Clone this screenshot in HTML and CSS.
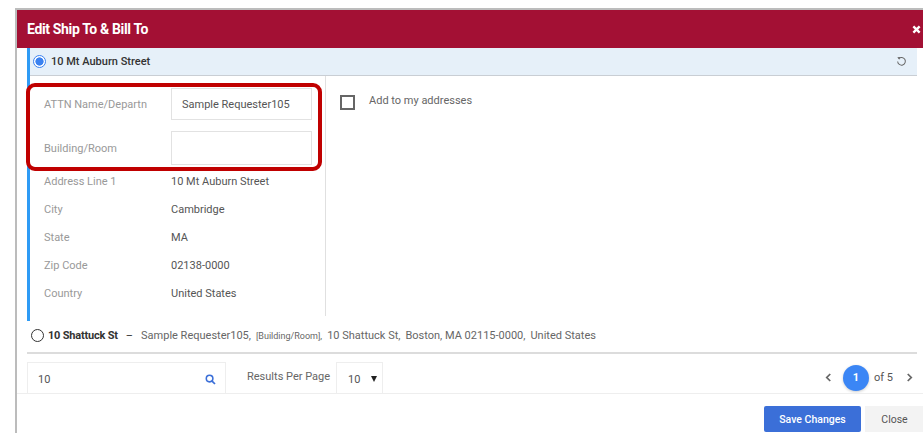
FILE: index.html
```html
<!DOCTYPE html>
<html lang="en">
<head>
<meta charset="utf-8">
<title>Edit Ship To &amp; Bill To</title>
<link rel="stylesheet" href="styles.css">
</head>
<body>
<div class="modal">
  <header class="modal-head">
    <h1>Edit Ship To &amp; Bill To</h1>
    <svg class="close-x" viewBox="0 0 10 10" width="9" height="9"><path d="M1.5 1.5l7 7M8.5 1.5l-7 7" stroke="#fff" stroke-width="2.6" fill="none"/></svg>
  </header>
  <div class="modal-body">
    <section class="address selected">
      <div class="address-title">
        <span class="radio on"></span>
        <span class="name">10 Mt Auburn Street</span>
        <svg class="reset" viewBox="0 0 12 12" width="11" height="11"><path d="M3 2.8A4.2 4.2 0 1 1 1.8 6" fill="none" stroke="#666" stroke-width="1.1"/><path d="M1.4 1.4L4.4 1.2 3.6 4.2z" fill="#666"/></svg>
      </div>
      <div class="address-detail">
        <div class="fields">
          <div class="highlight"></div>
          <div class="field-row first"><label>ATTN Name/Departn</label><div class="input">Sample Requester105</div></div>
          <div class="field-row second"><label>Building/Room</label><div class="input"></div></div>
          <div class="static-row"><label>Address Line 1</label><span>10 Mt Auburn Street</span></div>
          <div class="static-row"><label>City</label><span>Cambridge</span></div>
          <div class="static-row"><label>State</label><span>MA</span></div>
          <div class="static-row"><label>Zip Code</label><span>02138-0000</span></div>
          <div class="static-row"><label>Country</label><span>United States</span></div>
        </div>
        <div class="save-option">
          <span class="checkbox"></span>
          <span class="check-label">Add to my addresses</span>
        </div>
      </div>
    </section>
    <div class="address-line">
      <span class="radio"></span>
      <strong>10 Shattuck St</strong>
      <span class="dash">&ndash;</span>
      <span>Sample Requester105,</span>
      <span class="tiny">[Building/Room],</span>
      <span>10 Shattuck St,</span>
      <span>Boston, MA 02115-0000,</span>
      <span>United States</span>
    </div>
    <div class="toolbar">
      <div class="search">
        <span>10</span>
        <svg viewBox="0 0 12 12" width="11" height="11"><circle cx="5" cy="5" r="3.6" fill="none" stroke="#3b6fd8" stroke-width="1.7"/><path d="M7.7 7.7l3.2 3.2" stroke="#3b6fd8" stroke-width="1.9"/></svg>
      </div>
      <span class="per-page">Results Per Page</span>
      <div class="select"><span>10</span><i class="caret"></i></div>
      <nav class="pager">
        <svg viewBox="0 0 8 10" width="7" height="9"><path d="M6 1L2 5l4 4" fill="none" stroke="#666" stroke-width="2"/></svg>
        <span class="page-dot">1</span>
        <span class="page-of">of 5</span>
        <svg viewBox="0 0 8 10" width="7" height="9"><path d="M2 1l4 4-4 4" fill="none" stroke="#666" stroke-width="2"/></svg>
      </nav>
    </div>
  </div>
  <footer class="modal-foot">
    <button class="btn primary">Save Changes</button>
    <button class="btn plain">Close</button>
  </footer>
</div>
</body>
</html>
```
FILE: styles.css
```css
* { box-sizing: border-box; }
html, body { margin: 0; height: 100%; overflow: hidden; background: #fff; }
body {
  padding: 8px 0 0 15px;
  font-family: Roboto, "Liberation Sans", sans-serif;
  font-size: 11px;
  color: #555;
}
.modal {
  height: 425px;
  border-top: 2px solid #bcbcbc;
  border-left: 2px solid #bcbcbc;
  display: flex;
  flex-direction: column;
}
.modal-head {
  height: 38px;
  flex: none;
  background: #a31034;
  display: flex;
  align-items: center;
  justify-content: space-between;
  padding: 0 2px 0 10px;
}
.modal-head h1 {
  margin: 0;
  font-size: 14px;
  font-weight: 700;
  letter-spacing: -0.35px;
  color: #fff;
}
.modal-body { padding: 0 6px 0 10px; flex: none; height: 345px; }
.address.selected { border-left: 3px solid #2f9bf5; height: 273px; }
.address-title {
  height: 28px;
  background: #e6f0f9;
  border-bottom: 1px solid #c9ced4;
  display: flex;
  align-items: center;
  padding: 0 10px 1px 3px;
  color: #333;
  font-weight: 500;
}
.name { margin-left: 5px; flex: 1; }
.radio {
  width: 13px;
  height: 13px;
  border-radius: 50%;
  border: 1.5px solid #333;
  background: #fff;
  flex: none;
  display: inline-block;
}
.radio.on {
  border-color: #3b82f0;
  background: radial-gradient(circle, #3b82f0 0 3.8px, #fff 4.4px);
}
.address-detail { display: flex; height: 240px; }
.fields {
  position: relative;
  width: 296px;
  flex: none;
  border-right: 1px solid #e0e0e0;
  padding: 12px 13px 0 14px;
}
.highlight {
  position: absolute;
  left: -4px;
  top: 7px;
  width: 296px;
  height: 88px;
  border: 4px solid #c00000;
  border-radius: 9px;
  z-index: 1;
  pointer-events: none;
}
.field-row { display: flex; align-items: center; }
.field-row.first { height: 32px; }
.field-row.second { height: 34px; margin-top: 11px; margin-bottom: 2px; }
.fields label { width: 127px; flex: none; color: #999; }
.input {
  flex: 1;
  height: 100%;
  border: 1px solid #e2e2e2;
  padding-left: 10px;
  display: flex;
  align-items: center;
  color: #555;
}
.static-row { display: flex; align-items: center; height: 28px; color: #555; }
.save-option { display: flex; align-items: flex-start; padding: 19px 0 0 14px; }
.checkbox { width: 15px; height: 15px; border: 2px solid #666; background: #fff; flex: none; }
.check-label { margin: -1px 0 0 14px; color: #666; }
.address-line {
  height: 33px;
  border-bottom: 2px solid #dcdcdc;
  display: flex;
  align-items: center;
  gap: 5px;
  padding: 0 0 2px 4px;
  white-space: nowrap;
  color: #666;
}
.address-line strong { color: #333; font-weight: 700; margin-left: -2px; letter-spacing: -0.2px; }
.address-line .radio { margin-right: 1px; }
.address-line .dash { margin: 0 3px; color: #333; }
.tiny { font-size: 9px; }
.toolbar { display: flex; align-items: center; height: 40px; padding-top: 8px; }
.search {
  width: 199px;
  height: 32px;
  border: 1px solid #eee;
  border-bottom: 0;
  display: flex;
  align-items: center;
  justify-content: space-between;
  padding: 2px 9px 0 10px;
}
.per-page { margin-left: 21px; width: 89px; flex: none; color: #666; padding-bottom: 3px; }
.select {
  width: 47px;
  height: 32px;
  border: 1px solid #eee;
  border-bottom: 0;
  display: flex;
  align-items: center;
  gap: 11px;
  padding: 2px 0 0 11px;
}
.caret {
  width: 0;
  height: 0;
  border-left: 3.5px solid transparent;
  border-right: 3.5px solid transparent;
  border-top: 6px solid #222;
  margin-top: -1px;
}
.pager { margin-left: auto; display: flex; align-items: center; margin-right: 4px; padding-bottom: 1px; }
.page-dot {
  width: 26px;
  height: 26px;
  border-radius: 50%;
  background: #3b86f5;
  color: #fff;
  font-weight: 700;
  display: flex;
  align-items: center;
  justify-content: center;
  margin: 0 5px 0 11px;
  box-shadow: 0 1px 3px rgba(0, 0, 0, 0.2);
}
.page-of { margin-right: 13px; color: #555; }
.modal-foot {
  flex: 1;
  border-top: 1px solid #eee;
  display: flex;
  justify-content: flex-end;
  align-items: flex-start;
  gap: 4px;
  padding-top: 12px;
  margin-right: -1px;
}
.btn {
  height: 26px;
  border: 0;
  font: inherit;
  font-size: 10.5px;
  padding: 0;
}
.btn.primary { width: 97px; background: #3b6fd8; color: #fff; font-weight: 500; border-radius: 2px; }
.btn.plain { width: 59px; background: #f3f3f3; color: #555; }
```
